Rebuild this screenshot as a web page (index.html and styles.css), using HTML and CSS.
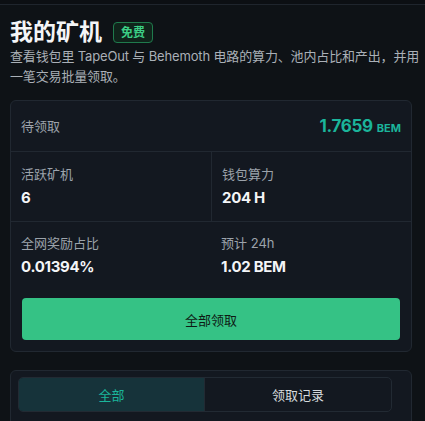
FILE: index.html
```html
<html>
<head>
    <title>我的矿机</title>
    <link rel="stylesheet" href="styles.css">
</head>
<body>
    <div class="topbar"></div>

    <div class="page">
        <!-- Heading -->
        <div class="head">
            <h1>我的矿机</h1>
            <span class="badge">免费</span>
        </div>
        <p class="desc">查看钱包里 TapeOut 与 Behemoth 电路的算力、池内占比和产出，并用一笔交易批量领取。</p>

        <!-- Summary card -->
        <div class="card">
            <div class="pending">
                <span class="label">待领取</span>
                <span class="amount">1.7659<small>BEM</small></span>
            </div>
            <div class="stats">
                <div class="stat">
                    <div class="label">活跃矿机</div>
                    <div class="value">6</div>
                </div>
                <div class="stat">
                    <div class="label">钱包算力</div>
                    <div class="value">204 H</div>
                </div>
            </div>
            <div class="stats last">
                <div class="stat">
                    <div class="label">全网奖励占比</div>
                    <div class="value">0.01394%</div>
                </div>
                <div class="stat">
                    <div class="label">预计 24h</div>
                    <div class="value">1.02 BEM</div>
                </div>
            </div>
            <div class="actions">
                <button type="button" class="claim">全部领取</button>
            </div>
        </div>

        <!-- Tabs -->
        <div class="card tabs-card">
            <div class="tabs">
                <button type="button" class="tab active">全部</button>
                <button type="button" class="tab">领取记录</button>
            </div>
        </div>
    </div>
</body>
</html>
```

FILE: styles.css
```css
body {
    margin: 0;
    background-color: #0e1216;
    color: #f2f4f6;
    font-family: Inter, "Noto Sans CJK SC", sans-serif;
}

.topbar {
    height: 4px;
    border-bottom: 1px solid #1f252d;
    background-color: #0c0f13;
}

.page {
    padding: 13px 13px 0 10px;
}

.head {
    display: flex;
    align-items: center;
    gap: 11px;
}

h1 {
    margin: 0;
    font-size: 23px;
    font-weight: 700;
    line-height: 28px;
    color: #f4f5f7;
}

.badge {
    border: 1px solid #1f7a4c;
    background-color: #10241b;
    color: #3ccf86;
    font-size: 12px;
    font-weight: 700;
    padding: 1px 7px;
    line-height: 17px;
    border-radius: 4px;
}

.desc {
    margin: 0 -11px 0 0;
    font-size: 13px;
    line-height: 20px;
    letter-spacing: -0.15px;
    color: #aab0b7;
}

.card {
    margin-top: 14px;
    background-color: #131820;
    border: 1px solid #212831;
    border-radius: 6px;
}

.pending {
    display: flex;
    justify-content: space-between;
    align-items: center;
    height: 50px;
    padding: 0 10px;
    border-bottom: 1px solid #212831;
}

.label {
    font-size: 13px;
    color: #9ca3ab;
    line-height: 18px;
}

.amount {
    color: #1bb59b;
    font-size: 17px;
    font-weight: 700;
    letter-spacing: -0.3px;
}

.amount small {
    font-size: 11px;
    margin-left: 4px;
    letter-spacing: 0;
}

.stats {
    display: grid;
    grid-template-columns: 1fr 1fr;
    border-bottom: 1px solid #212831;
}

.stats.last {
    border-bottom: none;
}

.stat {
    padding: 13px 10px 12px 10px;
}

.stat + .stat {
    border-left: 1px solid #212831;
}

.stats.last .stat {
    padding-top: 12px;
    padding-bottom: 0;
    border-left: none;
}

.value {
    margin-top: 4px;
    font-size: 15px;
    font-weight: 700;
    line-height: 22px;
    letter-spacing: -0.3px;
    color: #f4f5f7;
}

.actions {
    padding: 20px 11px 11px 11px;
}

.claim {
    width: 100%;
    height: 42px;
    border: none;
    border-radius: 4px;
    background-color: #35c285;
    color: #0e1a14;
    font-family: Inter, "Noto Sans CJK SC", sans-serif;
    font-size: 13px;
    cursor: pointer;
}

.tabs-card {
    margin-top: 18px;
    padding: 6px 7px 20px 7px;
}

.tabs {
    display: grid;
    grid-template-columns: 1fr 1fr;
    width: 372px;
    border: 1px solid #222a33;
    border-radius: 5px;
    overflow: hidden;
}

.tab {
    height: 33px;
    border: none;
    background-color: transparent;
    color: #d6dade;
    font-family: Inter, "Noto Sans CJK SC", sans-serif;
    font-size: 13px;
}

.tab.active {
    background-color: #16333a;
    color: #1bb59b;
    border-right: 1px solid #222a33;
}
```
